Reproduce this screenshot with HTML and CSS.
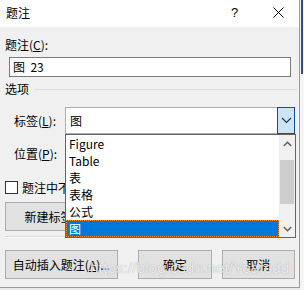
FILE: index.html
```html
<!DOCTYPE html>
<html lang="zh-CN">
<head>
<meta charset="utf-8">
<title>题注</title>
<link rel="stylesheet" href="styles.css">
</head>
<body>
<div class="screen">
  <div class="dialog">
    <div class="titlebar">
      <span class="title">题注</span>
      <span class="help">?</span>
      <span class="close"><svg width="11" height="11" viewBox="0 0 11 11"><path d="M0.5 0.5L10.5 10.5M10.5 0.5L0.5 10.5" stroke="#000" stroke-width="1" fill="none"/></svg></span>
    </div>
    <div class="content">
      <div class="label-top">题注(<u>C</u>):</div>
      <div class="textbox">图&nbsp; 23</div>
      <div class="group"><span>选项</span><span class="rule"></span></div>
      <div class="fields">
        <span class="flabel">标签(<u>L</u>):</span>
        <div class="combo active">
          <span class="combo-val">图</span>
          <span class="combo-btn"><svg width="11" height="7" viewBox="0 0 11 7"><path d="M1 1L5.5 5.5L10 1" stroke="#333" stroke-width="1.2" fill="none"/></svg></span>
        </div>
        <span class="flabel">位置(<u>P</u>):</span>
        <div class="combo">
          <span class="combo-val">所选项目下方</span>
          <span class="combo-btn plain"><svg width="11" height="7" viewBox="0 0 11 7"><path d="M1 1L5.5 5.5L10 1" stroke="#333" stroke-width="1.2" fill="none"/></svg></span>
        </div>
      </div>
      <div class="check-row"><span class="checkbox"></span><span>题注中不包含标签(<u>E</u>)</span></div>
      <div class="btn-row">
        <button class="btn wide">新建标签(<u>N</u>)...</button>
        <button class="btn">删除标签(<u>D</u>)</button>
        <button class="btn">编号(<u>U</u>)...</button>
      </div>
      <div class="sep"></div>
      <div class="actions">
        <button class="btn wide">自动插入题注(<u>A</u>)...</button>
        <span class="spacer"></span>
        <button class="btn small">确定</button>
        <button class="btn small">取消</button>
      </div>
    </div>
    <div class="dropdown">
      <ul class="items">
        <li>Figure</li>
        <li>Table</li>
        <li>表</li>
        <li>表格</li>
        <li>公式</li>
        <li class="selected">图</li>
      </ul>
      <div class="scrollbar">
        <span class="arrow"><svg width="9" height="6" viewBox="0 0 9 6"><path d="M0.8 5L4.5 1.3L8.2 5" stroke="#606060" stroke-width="1.6" fill="none"/></svg></span>
        <span class="track"><span class="thumb"></span></span>
        <span class="arrow"><svg width="9" height="6" viewBox="0 0 9 6"><path d="M0.8 1L4.5 4.7L8.2 1" stroke="#606060" stroke-width="1.6" fill="none"/></svg></span>
      </div>
    </div>
    <div class="watermark">https://blog.csdn.net/Yearsdd</div>
  </div>
  <div class="side"><span class="blue"></span></div>
</div>
</body>
</html>
```
FILE: styles.css
```css
* { box-sizing: border-box; }
html, body { margin: 0; padding: 0; }
body {
  width: 304px;
  height: 290px;
  overflow: hidden;
  background: #e9e9e9;
  font-family: "Noto Sans CJK SC", "Noto Sans", sans-serif;
  font-size: 12px;
  color: #000;
}
u { text-decoration: underline; text-underline-offset: 1px; }
.screen { display: flex; height: 290px; }
.dialog {
  position: relative;
  width: 300px;
  height: 288px;
  background: #f0f0f0;
  border-right: 1px solid #9a9a9a;
  border-bottom: 1px solid #9a9a9a;
  flex-shrink: 0;
}
.titlebar {
  height: 27px;
  background: #fff;
  display: flex;
  align-items: center;
  padding-left: 6px;
}
.title { flex: 1; line-height: 16px; margin-top: -2px; }
.help { font-family: "Liberation Sans", sans-serif; font-size: 13px; width: 42px; margin-top: -2px; }
.close { width: 26px; display: flex; margin-top: -3px; }
.content { padding: 0 4px 0 5px; }
.label-top { margin-top: 10px; line-height: 16px; }
.textbox {
  margin: 4px 0 0 4px;
  width: 282px;
  height: 20px;
  background: #fff;
  border: 1px solid #7a7a7a;
  padding-left: 3px;
  line-height: 17px;
}
.group {
  margin-top: 4px;
  height: 16px;
  line-height: 16px;
  display: flex;
  align-items: center;
}
.rule {
  flex: 1;
  height: 1px;
  background: #dcdcdc;
  margin: 0 -2px 0 6px;
}
.fields {
  margin-top: 10px;
  display: grid;
  grid-template-columns: 60px 1fr;
  grid-auto-rows: 27px;
  row-gap: 6px;
  align-items: center;
}
.flabel { padding-left: 9px; }
.combo {
  height: 27px;
  background: #fff;
  border: 1px solid #adadad;
  display: flex;
  align-items: center;
}
.combo-val { flex: 1; padding-left: 4px; }
.combo-btn {
  width: 18px;
  height: 27px;
  margin: -1px -1px -1px 0;
  display: flex;
  align-items: center;
  justify-content: center;
}
.active .combo-btn {
  background: #cce4f7;
  border: 1px solid #005499;
}
.check-row {
  margin-top: 14px;
  height: 13px;
  display: flex;
  align-items: center;
  gap: 4px;
  white-space: nowrap;
}
.checkbox {
  width: 13px;
  height: 13px;
  border: 1px solid #333;
  background: #fff;
  flex-shrink: 0;
}
.btn-row {
  margin-top: 8px;
  display: flex;
  gap: 8px;
}
.btn {
  height: 29px;
  background: #e1e1e1;
  border: 1px solid #adadad;
  font: inherit;
  color: #000;
  padding: 0;
  width: 74px;
}
.btn.wide { width: 114px; }
.sep {
  margin-top: 5px;
  margin-right: -2px;
  height: 2px;
  border-top: 1px solid #dcdcdc;
  border-bottom: 1px solid #fff;
}
.actions {
  margin-top: 12px;
  display: flex;
  gap: 10px;
}
.spacer { flex: 1; }
.dropdown {
  position: absolute;
  left: 65px;
  top: 134px;
  width: 231px;
  height: 104px;
  background: #fff;
  border: 1px solid #646464;
  display: flex;
}
.items {
  list-style: none;
  margin: 0;
  padding: 0;
  flex: 1;
}
.items li {
  height: 17px;
  line-height: 17px;
  padding-left: 3px;
}
.items li.selected {
  background: #0078d7;
  color: #fff;
  outline: 1px dotted #f08a24;
  outline-offset: -1px;
}
.scrollbar {
  width: 16px;
  background: #f0f0f0;
  display: flex;
  flex-direction: column;
}
.arrow {
  height: 17px;
  display: flex;
  align-items: center;
  justify-content: center;
}
.track { flex: 1; padding: 8px 1px 16px 1px; display: flex; }
.thumb { flex: 1; background: #cdcdcd; }
.watermark {
  position: absolute;
  left: 90px;
  top: 259px;
  font-family: "Liberation Sans", sans-serif;
  font-size: 15.5px;
  color: rgba(255, 255, 255, 0.8);
  text-shadow: 0 0 1px rgba(0, 0, 0, 0.35);
  white-space: nowrap;
}
.side {
  flex: 1;
  background: #f5f5f5;
  position: relative;
}
.blue {
  position: absolute;
  left: 1px;
  top: 0;
  width: 2px;
  height: 74px;
  background: #2b4f80;
}
```
